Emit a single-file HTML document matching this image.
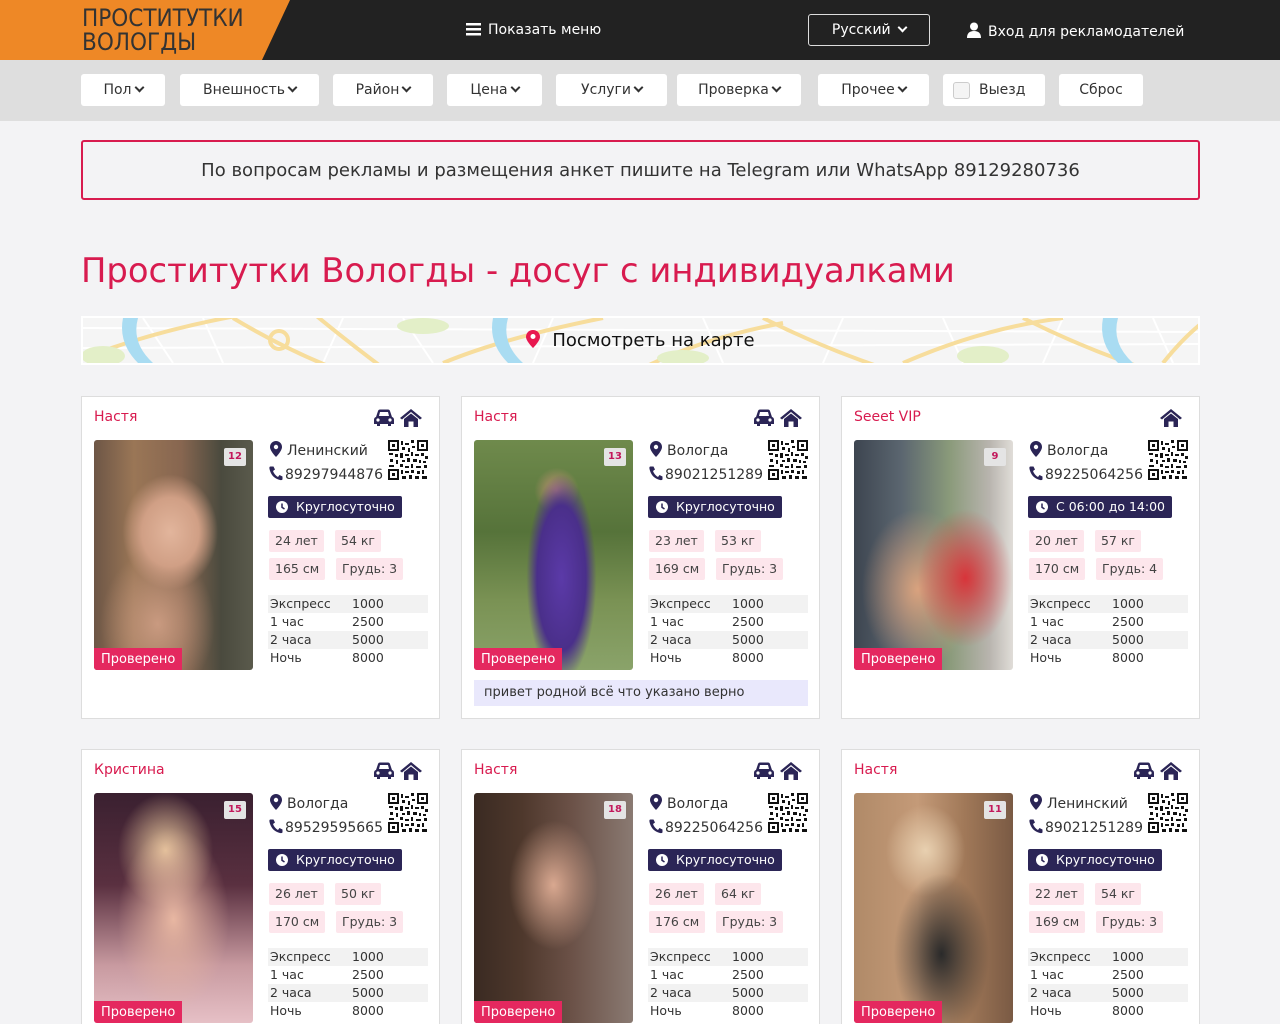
<!DOCTYPE html>
<html><head><meta charset="utf-8">
<style>
*{box-sizing:border-box;margin:0;padding:0}
html,body{width:1280px;height:1024px;overflow:hidden}
body{background:#f3f3f5;font-family:"DejaVu Sans","Liberation Sans",sans-serif;color:#333;position:relative}
.hdr{position:absolute;left:0;top:0;width:1280px;height:60px;background:#222}
.logo{position:absolute;left:0;top:0;width:290px;height:60px;background:#ee8826;clip-path:polygon(0 0,290px 0,262px 60px,0 60px)}
.logo span{position:absolute;left:82px;top:6px;font-size:24px;line-height:24px;color:#333;font-family:"DejaVu Sans Condensed","DejaVu Sans",sans-serif}
.menu{position:absolute;left:466px;top:22px;color:#fff;font-size:14px}
.lang{position:absolute;left:808px;top:14px;width:122px;height:32px;border:1px solid #ddd;border-radius:3px;color:#fff;font-size:14px;text-align:center;line-height:31px}
.login{position:absolute;left:966px;top:22px;color:#fff;font-size:14px}
.fbar{position:absolute;left:0;top:60px;width:1280px;height:61px;background:#dedede}
.fb{position:absolute;top:14px;height:32px;background:#fff;border-radius:3px;font-size:14px;line-height:33px;text-align:center;color:#333}
.chev{display:inline-block;width:7px;height:7px;border-right:2.5px solid #333;border-bottom:2.5px solid #333;transform:rotate(45deg);margin-left:4px;position:relative;top:-3px}
.notice{position:absolute;left:81px;top:140px;width:1119px;height:60px;border:2px solid #d81b4f;border-radius:3px;font-size:18px;text-align:center;line-height:57px;color:#333}
h1{position:absolute;left:81px;top:251px;font-weight:normal;font-size:33.8px;color:#d81b4f;white-space:nowrap}
.map{position:absolute;left:81px;top:316px;width:1119px;height:49px;border:2px solid #fff;overflow:hidden;background:#f5f5f5}
.map .t{position:absolute;left:0;width:100%;top:12px;text-align:center;font-size:18px;color:#111}
.card{position:absolute;width:359px;height:323px;background:#fff;border:1px solid #ddd}
.nm{position:absolute;left:12px;top:12px;font-size:14px;color:#d81b4f}
.ic{position:absolute;top:12px}
.ph{position:absolute;left:12px;top:43px;width:159px;height:230px;border-radius:3px;overflow:hidden}
.cnt{position:absolute;right:7px;top:8px;width:22px;height:18px;background:#e4e4e4;border-radius:2px;color:#c2185b;font-size:10px;font-weight:bold;text-align:center;line-height:18px}
.ver{position:absolute;left:0;bottom:0;background:#e4285f;color:#fff;font-size:13px;padding:0 7px;height:22px;line-height:23px}
.loc{position:absolute;left:188px;top:44px;font-size:14px;color:#333}
.tel{position:absolute;left:187px;top:69px;font-size:14px;color:#333}
.qr{position:absolute;left:306px;top:43px}
.time{position:absolute;left:186px;top:99px;height:22px;background:#2b2556;color:#fff;font-size:12.5px;line-height:22px;padding:0 7px 0 28px;border-radius:2px}
.time svg{position:absolute;left:8px;top:5px}
.chip{position:absolute;height:22px;background:#fde6ec;border-radius:2px;font-size:12.5px;line-height:22px;padding:0 6px;color:#444}
.pr{position:absolute;left:186px;top:198px;width:160px;font-size:12.5px;color:#333}
.pr div{height:18px;line-height:18px;padding-left:2px}
.pr div:nth-child(odd){background:#f2f2f2}
.pr b{font-weight:normal;position:absolute;left:84px}
.cm{position:absolute;left:12px;top:283px;width:334px;height:26px;background:#e9e8fc;font-size:13px;line-height:26px;padding-left:10px;color:#333}
</style></head><body>
<div class="hdr">
<div class="logo"><span>ПРОСТИТУТКИ<br>ВОЛОГДЫ</span></div>
<div class="menu"><svg width="16" height="14" style="vertical-align:-2px;margin-right:6px"><rect y="1" width="15" height="2.5" fill="#fff"/><rect y="6" width="15" height="2.5" fill="#fff"/><rect y="11" width="15" height="2.5" fill="#fff"/></svg>Показать меню</div>
<div class="lang">Русский <span class="chev" style="border-color:#fff"></span></div>
<div class="login"><svg width="16" height="16" style="vertical-align:-2px;margin-right:6px"><circle cx="8" cy="4.5" r="4" fill="#fff"/><path d="M1 16 Q1 9 8 9 Q15 9 15 16Z" fill="#fff"/></svg>Вход для рекламодателей</div>
</div>
<div class="fbar">
<div class="fb" style="left:81px;width:84px">Пол<span class="chev"></span></div>
<div class="fb" style="left:180px;width:139px">Внешность<span class="chev"></span></div>
<div class="fb" style="left:333px;width:100px">Район<span class="chev"></span></div>
<div class="fb" style="left:447px;width:95px">Цена<span class="chev"></span></div>
<div class="fb" style="left:556px;width:111px">Услуги<span class="chev"></span></div>
<div class="fb" style="left:677px;width:124px">Проверка<span class="chev"></span></div>
<div class="fb" style="left:818px;width:111px">Прочее<span class="chev"></span></div>
<div class="fb" style="left:943px;width:102px;text-align:left;padding-left:36px"><span style="position:absolute;left:10px;top:8px;width:17px;height:17px;border:1px solid #ccc;border-radius:3px;background:#f4f4f4"></span>Выезд</div>
<div class="fb" style="left:1059px;width:84px">Сброс</div>
</div>
<div class="notice">По вопросам рекламы и размещения анкет пишите на Telegram или WhatsApp 89129280736</div>
<h1>Проститутки Вологды - досуг с индивидуалками</h1>
<div class="map">
<svg width="1119" height="45" style="position:absolute;left:0;top:0">
<g fill="none" stroke="#fff" stroke-width="2">
<path d="M0 10 L1119 14"/><path d="M0 30 L1119 26"/><path d="M60 0 L90 45"/><path d="M120 0 L140 45"/><path d="M260 0 L240 45"/><path d="M320 0 L350 45"/><path d="M470 0 L450 45"/><path d="M620 0 L640 45"/><path d="M760 0 L740 45"/><path d="M860 0 L880 45"/><path d="M980 0 L960 45"/><path d="M1070 0 L1090 45"/>
</g>
<g fill="none" stroke="#f7dd9c" stroke-width="4">
<path d="M0 40 Q80 10 170 -5"/><path d="M150 0 Q200 30 250 50"/><circle cx="196" cy="22" r="9"/><path d="M230 -5 Q260 20 300 50"/><path d="M360 45 Q420 20 520 0"/><path d="M560 50 Q620 20 700 5"/><path d="M680 0 Q740 30 800 50"/><path d="M820 45 Q900 10 980 0"/><path d="M940 0 Q1000 30 1060 50"/><path d="M1080 45 Q1100 20 1119 5"/>
</g>
<g fill="#a9dcf2"><path d="M40 0 L55 0 Q48 25 70 45 L55 45 Q35 25 40 0Z"/><path d="M410 0 L425 0 Q418 25 440 45 L425 45 Q405 25 410 0Z"/><path d="M1020 0 L1035 0 Q1028 25 1050 45 L1035 45 Q1015 25 1020 0Z"/></g>
<g fill="#e3efc8"><ellipse cx="20" cy="38" rx="22" ry="10"/><ellipse cx="340" cy="8" rx="26" ry="8"/><ellipse cx="600" cy="40" rx="26" ry="8"/><ellipse cx="900" cy="38" rx="26" ry="10"/></g>
</svg>
<div class="t"><svg width="14" height="18" style="vertical-align:-2px;margin-right:12px"><path d="M7 0C3 0 0 3 0 7C0 11 7 18 7 18C7 18 14 11 14 7C14 3 11 0 7 0Z" fill="#e8174f"/><circle cx="7" cy="6.5" r="2.5" fill="#fff"/></svg>Посмотреть на карте</div>
</div>

<svg width="0" height="0" style="position:absolute">
<defs>
<g id="car"><path d="M3 8 L5 2 Q5.5 0.5 7 0.5 L15 0.5 Q16.5 0.5 17 2 L19 8 Q21 8.5 21 11 L21 15 L18 15 L18 17 L15 17 L15 15 L7 15 L7 17 L4 17 L4 15 L1 15 L1 11 Q1 8.5 3 8Z M6 7 L16 7 L15 3 L7 3Z" fill="#2b2556" fill-rule="evenodd"/><circle cx="5" cy="11" r="1.6" fill="#fff"/><circle cx="17" cy="11" r="1.6" fill="#fff"/></g>
<g id="home"><path d="M11 0 L22 9 L20 10.5 L11 3 L2 10.5 L0 9Z M4 10 L11 4.5 L18 10 L18 18 L13.5 18 L13.5 12.5 L8.5 12.5 L8.5 18 L4 18Z" fill="#2b2556"/></g>
<g id="pin"><path d="M6 0C2.7 0 0 2.7 0 6C0 10 6 16 6 16C6 16 12 10 12 6C12 2.7 9.3 0 6 0Z" fill="#2b2556"/><circle cx="6" cy="6" r="2.2" fill="#fff"/></g>
<g id="tel"><path d="M13.5 10.5 L10.5 9 L9 11 Q5.5 9 4 5 L6 3.5 L4.5 0.5 L1.5 0.5 Q0 0.5 0.5 3 Q2.5 12 11 14 Q13.5 14.5 13.5 13Z" fill="#2b2556"/></g>
<g id="clk"><circle cx="6" cy="6" r="6" fill="#fff"/><path d="M6 2.5 V6.3 L8.5 8" stroke="#2b2556" stroke-width="1.5" fill="none"/></g>
<g id="qr"><rect width="40" height="40" fill="#fff"/>
<g fill="#111"><rect x="0" y="0" width="11" height="11"/><rect x="29" y="0" width="11" height="11"/><rect x="0" y="29" width="11" height="11"/></g>
<g fill="#fff"><rect x="2" y="2" width="7" height="7"/><rect x="31" y="2" width="7" height="7"/><rect x="2" y="31" width="7" height="7"/></g>
<g fill="#111"><rect x="4" y="4" width="3" height="3"/><rect x="33" y="4" width="3" height="3"/><rect x="4" y="33" width="3" height="3"/>
<rect x="13" y="1" width="2" height="4"/><rect x="17" y="3" width="4" height="2"/><rect x="23" y="0" width="3" height="3"/><rect x="14" y="7" width="3" height="3"/><rect x="20" y="8" width="2" height="4"/><rect x="24" y="6" width="3" height="2"/>
<rect x="1" y="13" width="4" height="2"/><rect x="7" y="14" width="3" height="3"/><rect x="12" y="13" width="3" height="5"/><rect x="17" y="14" width="4" height="2"/><rect x="23" y="12" width="2" height="4"/><rect x="27" y="14" width="4" height="2"/><rect x="33" y="13" width="3" height="3"/><rect x="37" y="16" width="3" height="3"/>
<rect x="2" y="19" width="3" height="3"/><rect x="8" y="20" width="2" height="4"/><rect x="14" y="20" width="3" height="2"/><rect x="19" y="18" width="3" height="4"/><rect x="25" y="19" width="4" height="3"/><rect x="31" y="20" width="2" height="3"/><rect x="35" y="21" width="3" height="2"/>
<rect x="1" y="25" width="5" height="2"/><rect x="12" y="24" width="3" height="3"/><rect x="17" y="26" width="4" height="2"/><rect x="23" y="24" width="2" height="4"/><rect x="28" y="26" width="5" height="2"/><rect x="36" y="25" width="3" height="3"/>
<rect x="13" y="30" width="2" height="4"/><rect x="17" y="31" width="4" height="2"/><rect x="23" y="30" width="3" height="3"/><rect x="29" y="31" width="3" height="3"/><rect x="34" y="30" width="2" height="4"/><rect x="14" y="36" width="4" height="3"/><rect x="21" y="35" width="3" height="4"/><rect x="27" y="36" width="4" height="3"/><rect x="34" y="36" width="5" height="3"/></g></g>
</defs></svg>

<div class="card" style="left:81px;top:396px">
<div class="nm">Настя</div>
<svg class="ic" style="left:291px" width="22" height="18"><use href="#car"/></svg>
<svg class="ic" style="left:318px" width="22" height="18"><use href="#home"/></svg>
<div class="ph" style="background:radial-gradient(ellipse 30% 25% at 48% 40%,#e2b59c 0,#d09f85 60%,transparent 100%),radial-gradient(ellipse 45% 40% at 40% 80%,#c99a80,transparent 80%),linear-gradient(90deg,#6d5646 0,#9a7656 25%,#876650 55%,#4a4a3e 80%,#5a5a4c 100%)"><div class="cnt">12</div><div class="ver">Проверено</div></div>
<div class="loc"><svg width="12" height="16" style="vertical-align:-2px;margin-right:5px"><use href="#pin"/></svg>Ленинский</div>
<div class="tel"><svg width="14" height="15" style="vertical-align:-2px;margin-right:2px"><use href="#tel"/></svg>89297944876</div>
<svg class="qr" width="40" height="40"><use href="#qr"/></svg>
<div class="time"><svg width="12" height="12"><use href="#clk"/></svg>Круглосуточно</div>
<div class="chip" style="left:187px;top:133px">24 лет</div><div class="chip" style="left:253px;top:133px">54 кг</div>
<div class="chip" style="left:187px;top:161px">165 см</div><div class="chip" style="left:254px;top:161px">Грудь: 3</div>
<div class="pr"><div>Экспресс<b>1000</b></div><div>1 час<b>2500</b></div><div>2 часа<b>5000</b></div><div>Ночь<b>8000</b></div></div>
</div>

<div class="card" style="left:461px;top:396px">
<div class="nm">Настя</div>
<svg class="ic" style="left:291px" width="22" height="18"><use href="#car"/></svg>
<svg class="ic" style="left:318px" width="22" height="18"><use href="#home"/></svg>
<div class="ph" style="background:radial-gradient(ellipse 22% 45% at 55% 60%,#5b3aa8,#4a2f8a 70%,transparent 100%),radial-gradient(ellipse 14% 10% at 52% 22%,#c69276,transparent 100%),linear-gradient(180deg,#6f8a4c 0,#56733a 40%,#7a9254 70%,#8aa36a 100%)"><div class="cnt">13</div><div class="ver">Проверено</div></div>
<div class="loc"><svg width="12" height="16" style="vertical-align:-2px;margin-right:5px"><use href="#pin"/></svg>Вологда</div>
<div class="tel"><svg width="14" height="15" style="vertical-align:-2px;margin-right:2px"><use href="#tel"/></svg>89021251289</div>
<svg class="qr" width="40" height="40"><use href="#qr"/></svg>
<div class="time"><svg width="12" height="12"><use href="#clk"/></svg>Круглосуточно</div>
<div class="chip" style="left:187px;top:133px">23 лет</div><div class="chip" style="left:253px;top:133px">53 кг</div>
<div class="chip" style="left:187px;top:161px">169 см</div><div class="chip" style="left:254px;top:161px">Грудь: 3</div>
<div class="pr"><div>Экспресс<b>1000</b></div><div>1 час<b>2500</b></div><div>2 часа<b>5000</b></div><div>Ночь<b>8000</b></div></div>
<div class="cm">привет родной всё что указано верно</div>
</div>

<div class="card" style="left:841px;top:396px">
<div class="nm">Seeet VIP</div>
<svg class="ic" style="left:318px" width="22" height="18"><use href="#home"/></svg>
<div class="ph" style="background:radial-gradient(ellipse 30% 30% at 70% 60%,#d8343a,transparent 100%),radial-gradient(ellipse 35% 35% at 40% 65%,#d9a27e,transparent 100%),linear-gradient(90deg,#3d4550 0,#5b6670 30%,#8a9a7a 60%,#b8b4ae 85%,#e0ddd8 100%)"><div class="cnt">9</div><div class="ver">Проверено</div></div>
<div class="loc"><svg width="12" height="16" style="vertical-align:-2px;margin-right:5px"><use href="#pin"/></svg>Вологда</div>
<div class="tel"><svg width="14" height="15" style="vertical-align:-2px;margin-right:2px"><use href="#tel"/></svg>89225064256</div>
<svg class="qr" width="40" height="40"><use href="#qr"/></svg>
<div class="time"><svg width="12" height="12"><use href="#clk"/></svg>С 06:00 до 14:00</div>
<div class="chip" style="left:187px;top:133px">20 лет</div><div class="chip" style="left:253px;top:133px">57 кг</div>
<div class="chip" style="left:187px;top:161px">170 см</div><div class="chip" style="left:254px;top:161px">Грудь: 4</div>
<div class="pr"><div>Экспресс<b>1000</b></div><div>1 час<b>2500</b></div><div>2 часа<b>5000</b></div><div>Ночь<b>8000</b></div></div>
</div>

<div class="card" style="left:81px;top:749px">
<div class="nm">Кристина</div>
<svg class="ic" style="left:291px" width="22" height="18"><use href="#car"/></svg>
<svg class="ic" style="left:318px" width="22" height="18"><use href="#home"/></svg>
<div class="ph" style="background:radial-gradient(ellipse 35% 40% at 50% 55%,#e8b7a2,transparent 100%),radial-gradient(ellipse 30% 25% at 45% 25%,#e3c39a,transparent 100%),linear-gradient(180deg,#3a2030 0,#5a3040 40%,#c89aa0 75%,#e6c0c6 100%)"><div class="cnt">15</div><div class="ver">Проверено</div></div>
<div class="loc"><svg width="12" height="16" style="vertical-align:-2px;margin-right:5px"><use href="#pin"/></svg>Вологда</div>
<div class="tel"><svg width="14" height="15" style="vertical-align:-2px;margin-right:2px"><use href="#tel"/></svg>89529595665</div>
<svg class="qr" width="40" height="40"><use href="#qr"/></svg>
<div class="time"><svg width="12" height="12"><use href="#clk"/></svg>Круглосуточно</div>
<div class="chip" style="left:187px;top:133px">26 лет</div><div class="chip" style="left:253px;top:133px">50 кг</div>
<div class="chip" style="left:187px;top:161px">170 см</div><div class="chip" style="left:254px;top:161px">Грудь: 3</div>
<div class="pr"><div>Экспресс<b>1000</b></div><div>1 час<b>2500</b></div><div>2 часа<b>5000</b></div><div>Ночь<b>8000</b></div></div>
</div>

<div class="card" style="left:461px;top:749px">
<div class="nm">Настя</div>
<svg class="ic" style="left:291px" width="22" height="18"><use href="#car"/></svg>
<svg class="ic" style="left:318px" width="22" height="18"><use href="#home"/></svg>
<div class="ph" style="background:radial-gradient(ellipse 28% 28% at 50% 40%,#d9a890,transparent 100%),linear-gradient(90deg,#3a2a22 0,#4e382c 30%,#6a5046 60%,#8a7a72 100%)"><div class="cnt">18</div><div class="ver">Проверено</div></div>
<div class="loc"><svg width="12" height="16" style="vertical-align:-2px;margin-right:5px"><use href="#pin"/></svg>Вологда</div>
<div class="tel"><svg width="14" height="15" style="vertical-align:-2px;margin-right:2px"><use href="#tel"/></svg>89225064256</div>
<svg class="qr" width="40" height="40"><use href="#qr"/></svg>
<div class="time"><svg width="12" height="12"><use href="#clk"/></svg>Круглосуточно</div>
<div class="chip" style="left:187px;top:133px">26 лет</div><div class="chip" style="left:253px;top:133px">64 кг</div>
<div class="chip" style="left:187px;top:161px">176 см</div><div class="chip" style="left:254px;top:161px">Грудь: 3</div>
<div class="pr"><div>Экспресс<b>1000</b></div><div>1 час<b>2500</b></div><div>2 часа<b>5000</b></div><div>Ночь<b>8000</b></div></div>
</div>

<div class="card" style="left:841px;top:749px">
<div class="nm">Настя</div>
<svg class="ic" style="left:291px" width="22" height="18"><use href="#car"/></svg>
<svg class="ic" style="left:318px" width="22" height="18"><use href="#home"/></svg>
<div class="ph" style="background:radial-gradient(ellipse 30% 35% at 55% 70%,#2a2a2a,transparent 100%),radial-gradient(ellipse 25% 20% at 45% 25%,#e8d0b0,transparent 100%),linear-gradient(90deg,#b08a68 0,#c49a78 40%,#a07858 70%,#7a5a44 100%)"><div class="cnt">11</div><div class="ver">Проверено</div></div>
<div class="loc"><svg width="12" height="16" style="vertical-align:-2px;margin-right:5px"><use href="#pin"/></svg>Ленинский</div>
<div class="tel"><svg width="14" height="15" style="vertical-align:-2px;margin-right:2px"><use href="#tel"/></svg>89021251289</div>
<svg class="qr" width="40" height="40"><use href="#qr"/></svg>
<div class="time"><svg width="12" height="12"><use href="#clk"/></svg>Круглосуточно</div>
<div class="chip" style="left:187px;top:133px">22 лет</div><div class="chip" style="left:253px;top:133px">54 кг</div>
<div class="chip" style="left:187px;top:161px">169 см</div><div class="chip" style="left:254px;top:161px">Грудь: 3</div>
<div class="pr"><div>Экспресс<b>1000</b></div><div>1 час<b>2500</b></div><div>2 часа<b>5000</b></div><div>Ночь<b>8000</b></div></div>
</div>
</body></html>
